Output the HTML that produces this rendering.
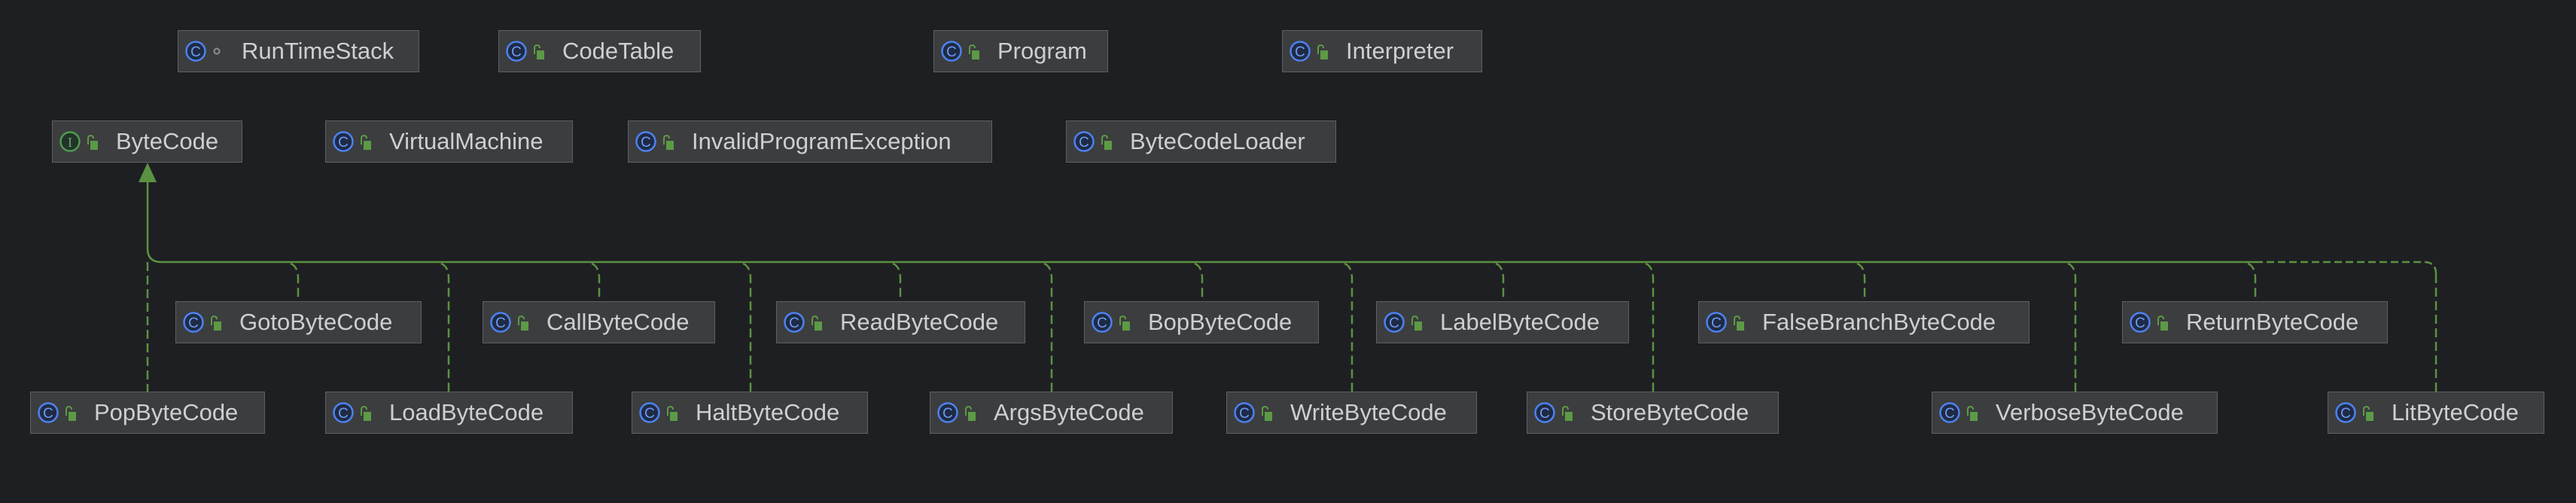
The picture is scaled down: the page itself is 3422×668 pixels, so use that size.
<!DOCTYPE html>
<html><head><meta charset="utf-8"><style>
html,body{margin:0;padding:0;background:#1e1f22;width:3422px;height:668px;overflow:hidden;position:relative;font-family:"Liberation Sans",sans-serif}
.b{position:absolute;height:54px;background:#3c3d3f;border:1px solid #5f6063;box-sizing:content-box;white-space:nowrap;overflow:hidden}
.b .t{position:absolute;top:0;line-height:54px;font-size:31px;color:#cdcfd4;left:84px}
.b svg.ic{position:absolute;left:9px;top:13px}
svg.lines{position:absolute;left:0;top:0}
</style></head><body>
<svg class="lines" width="3422" height="668">
<g fill="none" stroke="#5b9241" stroke-width="2.5">
<path d="M196 240 V330 Q196 348 214 348 H2996"/>
<path d="M2996 348 H3220 Q3236 348 3236 364" stroke-dasharray="10 5"/>
<g stroke-dasharray="12 6">
<path d="M196 348 V520"/>
<path d="M386 350 Q396 354 396 370 V400"/>
<path d="M586 350 Q596 354 596 370 V520"/>
<path d="M786 350 Q796 354 796 370 V400"/>
<path d="M987 350 Q997 354 997 370 V520"/>
<path d="M1186 350 Q1196 354 1196 370 V400"/>
<path d="M1387 350 Q1397 354 1397 370 V520"/>
<path d="M1587 350 Q1597 354 1597 370 V400"/>
<path d="M1786 350 Q1796 354 1796 370 V520"/>
<path d="M1987 350 Q1997 354 1997 370 V400"/>
<path d="M2186 350 Q2196 354 2196 370 V520"/>
<path d="M2467 350 Q2477 354 2477 370 V400"/>
<path d="M2747 350 Q2757 354 2757 370 V520"/>
<path d="M2986 350 Q2996 354 2996 370 V400"/>
<path d="M3236 364 V520"/>
</g></g>
<polygon points="196,216 184,242 208,242" fill="#5b9241"/>
</svg>
<div id="boxes"></div>
<script>
const C='<svg class="ic" width="60" height="30"><circle cx="14" cy="14" r="12.5" fill="#1f2b45" stroke="#4d82ee" stroke-width="2.5"/><text x="14" y="21" text-anchor="middle" font-size="19" fill="#6e9cf5" font-family="Liberation Sans">C</text>';
const I='<svg class="ic" width="60" height="30"><circle cx="14" cy="14" r="12.5" fill="#24332a" stroke="#4f9a52" stroke-width="2.5"/><text x="14" y="21" text-anchor="middle" font-size="18" fill="#5fa864" font-family="Liberation Serif">I</text>';
const L='<path d="M38 18 V10 Q38 6 41.5 6 Q45 6 45 10" fill="none" stroke="#5c9a45" stroke-width="2"/><rect x="41" y="13" width="10" height="12" fill="#5c9a45"/></svg>';
const D='<circle cx="42" cy="14" r="3.5" fill="none" stroke="#8b9097" stroke-width="2"/></svg>';
const bx=[
["RunTimeStack",236,557,40,C,D],["CodeTable",662,931,40],["Program",1240,1472,40],["Interpreter",1703,1969,40],
["ByteCode",69,322,160,I],["VirtualMachine",432,761,160],["InvalidProgramException",834,1318,160],["ByteCodeLoader",1416,1775,160],
["GotoByteCode",233,560,400],["CallByteCode",641,950,400],["ReadByteCode",1031,1362,400],["BopByteCode",1440,1752,400],["LabelByteCode",1828,2164,400],["FalseBranchByteCode",2256,2696,400],["ReturnByteCode",2819,3172,400],
["PopByteCode",40,352,520],["LoadByteCode",432,761,520],["HaltByteCode",839,1153,520],["ArgsByteCode",1235,1558,520],["WriteByteCode",1629,1962,520],["StoreByteCode",2028,2363,520],["VerboseByteCode",2566,2946,520],["LitByteCode",3092,3380,520]];
let h='';
for(const b of bx){h+=`<div class="b" style="left:${b[1]}px;top:${b[3]}px;width:${b[2]-b[1]-2}px">${(b[4]||C)+(b[5]||L)}<span class="t">${b[0]}</span></div>`;}
document.getElementById('boxes').innerHTML=h;
</script>
</body></html>
